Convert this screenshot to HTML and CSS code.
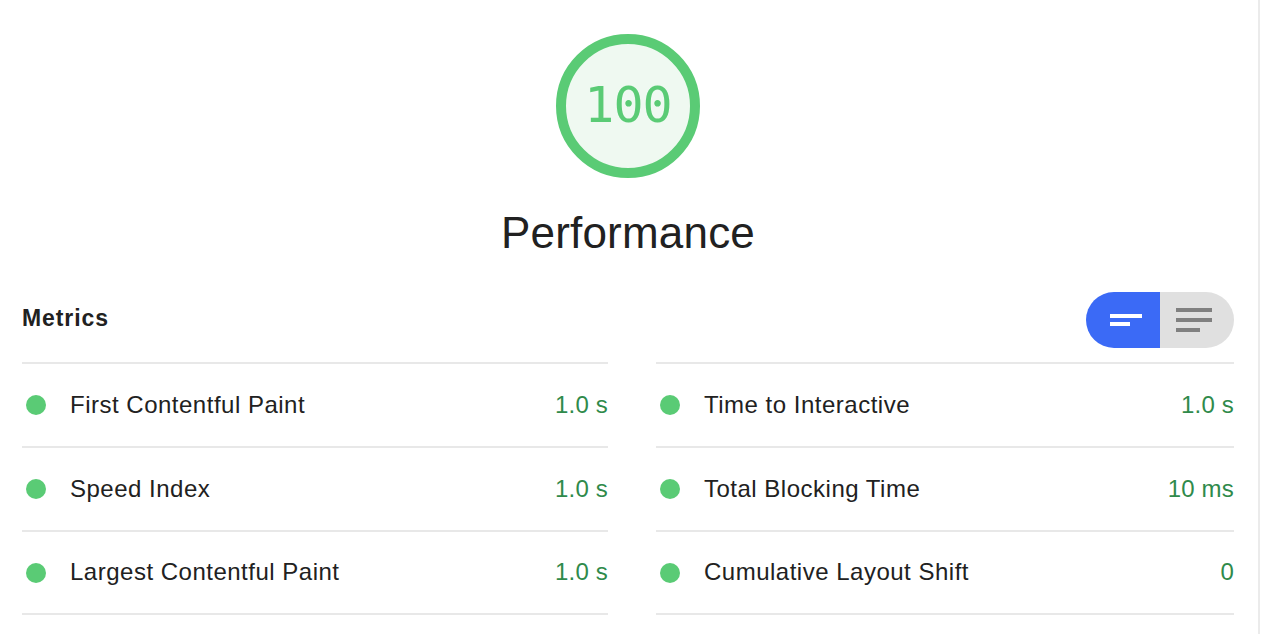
FILE: index.html
```html
<!DOCTYPE html>
<html lang="en">
<head>
<meta charset="utf-8">
<title>Performance</title>
<link rel="stylesheet" href="styles.css">
</head>
<body>
<main class="page">
  <section class="score">
    <div class="gauge">
      <svg class="gauge-ring" width="144" height="144" viewBox="0 0 144 144">
        <circle cx="72" cy="72" r="67" fill="#eff9f1" stroke="#5acb75" stroke-width="10"/>
      </svg>
      <span class="gauge-value">100</span>
    </div>
    <h1 class="score-title">Performance</h1>
  </section>

  <div class="metrics-header">
    <h2 class="metrics-title">Metrics</h2>
    <div class="toggle">
      <button class="toggle-btn toggle-btn--active" aria-label="Compact view">
        <svg width="32" height="12" viewBox="0 0 32 12">
          <rect x="0" y="0" width="32" height="4" fill="#fff"/>
          <rect x="0" y="8" width="20" height="4" fill="#fff"/>
        </svg>
      </button>
      <button class="toggle-btn toggle-btn--plain" aria-label="Expanded view">
        <svg width="36" height="24" viewBox="0 0 36 24">
          <rect x="0" y="0" width="36" height="4" fill="#808080"/>
          <rect x="0" y="10" width="36" height="4" fill="#808080"/>
          <rect x="0" y="20" width="24" height="4" fill="#808080"/>
        </svg>
      </button>
    </div>
  </div>

  <div class="metrics">
    <ul class="metric-list">
      <li class="metric"><span class="dot"></span><span class="label">First Contentful Paint</span><span class="value">1.0 s</span></li>
      <li class="metric"><span class="dot"></span><span class="label">Speed Index</span><span class="value">1.0 s</span></li>
      <li class="metric"><span class="dot"></span><span class="label">Largest Contentful Paint</span><span class="value">1.0 s</span></li>
    </ul>
    <ul class="metric-list">
      <li class="metric"><span class="dot"></span><span class="label">Time to Interactive</span><span class="value">1.0 s</span></li>
      <li class="metric"><span class="dot"></span><span class="label">Total Blocking Time</span><span class="value">10 ms</span></li>
      <li class="metric"><span class="dot"></span><span class="label">Cumulative Layout Shift</span><span class="value">0</span></li>
    </ul>
  </div>
</main>
</body>
</html>
```

FILE: styles.css
```css
* {
  box-sizing: border-box;
}

html, body {
  margin: 0;
  padding: 0;
  background: #fff;
}

body {
  font-family: "Liberation Sans", Arial, sans-serif;
  color: #212121;
  overflow: hidden;
}

.page {
  width: 1260px;
  height: 634px;
  padding: 0 24px 0 22px;
  border-right: 2px solid #ebebeb;
}

.score {
  display: flex;
  flex-direction: column;
  align-items: center;
  padding-top: 34px;
}

.gauge {
  position: relative;
  width: 144px;
  height: 144px;
  display: flex;
  align-items: center;
  justify-content: center;
}

.gauge-ring {
  position: absolute;
  left: 0;
  top: 0;
}

.gauge-value {
  position: relative;
  font-family: "DejaVu Sans Mono", "Liberation Mono", monospace;
  font-size: 50px;
  line-height: 1;
  color: #5acb75;
  letter-spacing: -1px;
  margin-top: -2px;
}

.score-title {
  margin: 33px 0 0;
  font-size: 44px;
  line-height: 44px;
  font-weight: 400;
  color: #212121;
  letter-spacing: 0.2px;
}

.metrics-header {
  display: flex;
  align-items: center;
  justify-content: space-between;
  margin-top: 37px;
  height: 56px;
}

.metrics-title {
  margin: 0;
  font-size: 23px;
  font-weight: 700;
  letter-spacing: 0.9px;
  color: #212121;
  margin-top: -4px;
}

.toggle {
  display: flex;
  width: 148px;
  height: 56px;
  border-radius: 28px;
  overflow: hidden;
}

.toggle-btn {
  flex: 0 0 74px;
  width: 74px;
  display: flex;
  align-items: center;
  justify-content: center;
  border: 0;
  padding: 0;
  margin: 0;
  background: #e0e0e0;
}

.toggle-btn--active {
  background: #3b6af6;
  padding-left: 6px;
}

.toggle-btn--plain {
  padding-right: 6px;
}

.metrics {
  display: grid;
  grid-template-columns: 586px 578px;
  column-gap: 48px;
  margin-top: 14px;
}

.metric-list {
  list-style: none;
  margin: 0;
  padding: 0;
  border-top: 2px solid #e8e8e8;
}

.metric {
  display: flex;
  align-items: center;
  height: 84px;
  border-bottom: 2px solid #e8e8e8;
  font-size: 24px;
}

.metric-list .metric:last-child {
  height: 83px;
}

.dot {
  width: 20px;
  height: 20px;
  border-radius: 50%;
  background: #5acb75;
  margin-left: 4px;
  margin-right: 24px;
  flex: none;
}

.label {
  flex: 1;
  letter-spacing: 0.5px;
  color: #212121;
  margin-top: -1px;
}

.value {
  color: #2f8a4b;
  letter-spacing: 0.2px;
  margin-top: -1px;
}
```
